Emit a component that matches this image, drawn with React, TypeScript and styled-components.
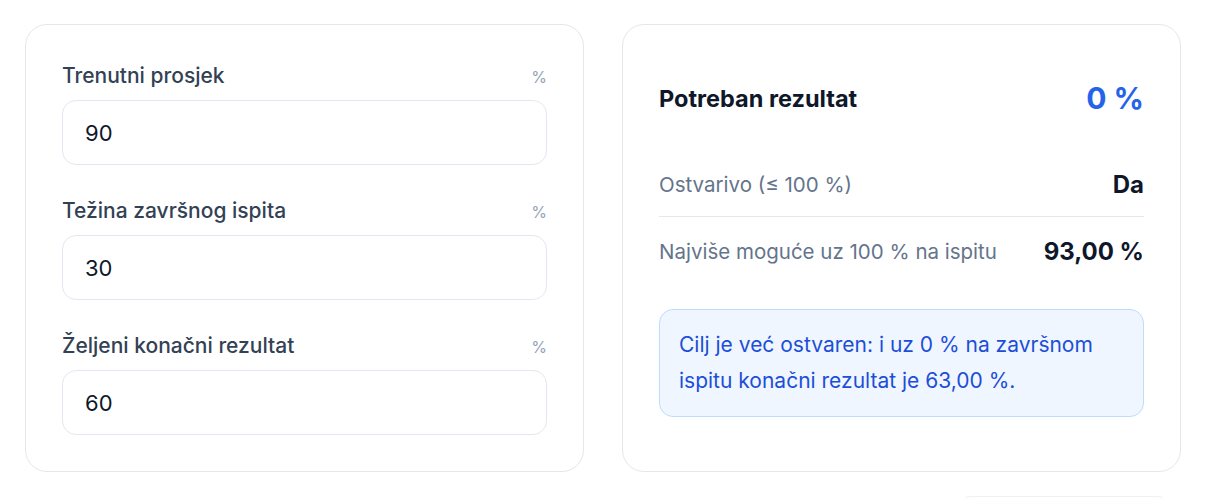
import { styled, createGlobalStyle } from 'styled-components';
import { useState } from 'react';

const GlobalStyle = createGlobalStyle`
    body {
        margin: 0;
        background: #ffffff;
        font-family: 'Inter', 'Noto Sans', sans-serif;
        color: #0f172a;
        overflow: hidden;
    }
`;

const Page = styled.div`
    padding: 24px 25px;
`;

const Grid = styled.div`
    display: grid;
    grid-template-columns: 1fr 1fr;
    gap: 38px;
`;

const Card = styled.div`
    background: #ffffff;
    border: 1px solid #e5e7eb;
    border-radius: 22px;
    padding: 38px 36px 36px;
    display: flex;
    flex-direction: column;
`;

const Field = styled.div`
    display: flex;
    flex-direction: column;
    & + & {
        margin-top: 33px;
    }
`;

const LabelRow = styled.div`
    display: flex;
    justify-content: space-between;
    align-items: baseline;
    margin-bottom: 11px;
`;

const FieldLabel = styled.label`
    font-size: 21px;
    line-height: 26px;
    font-weight: 500;
    color: #334155;
`;

const Unit = styled.span`
    font-size: 16px;
    color: #94a3b8;
`;

const NumberInput = styled.input`
    box-sizing: border-box;
    height: 65px;
    width: 100%;
    border: 1px solid #e2e8f0;
    border-radius: 14px;
    padding: 0 22px;
    font-family: inherit;
    font-size: 22px;
    color: #0f172a;
    background: #ffffff;
    outline: none;
`;

const ResultHeader = styled.div`
    display: flex;
    justify-content: space-between;
    align-items: center;
    height: 74px;
    margin-top: -2px;
    margin-bottom: 18px;
`;

const ResultTitle = styled.h2`
    margin: 0;
    font-size: 23.5px;
    font-weight: 700;
    color: #0f172a;
`;

const ResultValue = styled.span`
    font-size: 30px;
    font-weight: 700;
    color: #2563eb;
`;

const StatRow = styled.div<{ $last?: boolean }>`
    display: flex;
    justify-content: space-between;
    align-items: center;
    height: ${(p) => (p.$last ? 68 : 64)}px;
    border-bottom: ${(p) => (p.$last ? 'none' : '1px solid #e5e7eb')};
    box-sizing: border-box;
`;

const StatLabel = styled.span`
    font-size: 20.5px;
    color: #64748b;
`;

const StatValue = styled.span`
    font-size: 24px;
    font-weight: 700;
    color: #0f172a;
`;

const InfoBox = styled.div`
    margin-top: 24px;
    background: #eff6ff;
    border: 1px solid #bfdbfe;
    border-radius: 14px;
    padding: 17px 19px;
    font-size: 21px;
    line-height: 36px;
    color: #1d4ed8;
`;

const Footer = styled.div`
    display: flex;
    justify-content: flex-end;
    margin-top: 24px;
    padding-right: 13px;
`;

const GhostButton = styled.button`
    width: 208px;
    height: 44px;
    border: 1px solid #eef0f3;
    border-radius: 10px;
    background: #ffffff;
`;

function fmt(n: number) {
    return n.toFixed(2).replace('.', ',');
}

export default function App() {
    const [current, setCurrent] = useState("90");
    const [weight, setWeight] = useState("30");
    const [target, setTarget] = useState("60");

    const c = Number(current);
    const w = Number(weight) / 100;
    const t = Number(target);
    const base = c * (1 - w);
    const needed = w > 0 ? (t - base) / w : 0;
    const shown = Math.max(0, Math.round(needed));
    const best = base + 100 * w;

    return (
        <Page>
            <GlobalStyle />
            <Grid>
                <Card>
                    <Field>
                        <LabelRow>
                            <FieldLabel>Trenutni prosjek</FieldLabel>
                            <Unit>%</Unit>
                        </LabelRow>
                        <NumberInput value={current} onChange={(e) => setCurrent(e.target.value)} />
                    </Field>
                    <Field>
                        <LabelRow>
                            <FieldLabel>Težina završnog ispita</FieldLabel>
                            <Unit>%</Unit>
                        </LabelRow>
                        <NumberInput value={weight} onChange={(e) => setWeight(e.target.value)} />
                    </Field>
                    <Field>
                        <LabelRow>
                            <FieldLabel>Željeni konačni rezultat</FieldLabel>
                            <Unit>%</Unit>
                        </LabelRow>
                        <NumberInput value={target} onChange={(e) => setTarget(e.target.value)} />
                    </Field>
                </Card>

                <Card>
                    <ResultHeader>
                        <ResultTitle>Potreban rezultat</ResultTitle>
                        <ResultValue>{shown} %</ResultValue>
                    </ResultHeader>
                    <StatRow>
                        <StatLabel>Ostvarivo (≤ 100 %)</StatLabel>
                        <StatValue>{needed <= 100 ? 'Da' : 'Ne'}</StatValue>
                    </StatRow>
                    <StatRow $last>
                        <StatLabel>Najviše moguće uz 100 % na ispitu</StatLabel>
                        <StatValue>{fmt(best)} %</StatValue>
                    </StatRow>
                    <InfoBox>
                        Cilj je već ostvaren: i uz 0 % na završnom ispitu konačni rezultat je {fmt(base)} %.
                    </InfoBox>
                </Card>
            </Grid>
            <Footer>
                <GhostButton />
            </Footer>
        </Page>
    );
}
